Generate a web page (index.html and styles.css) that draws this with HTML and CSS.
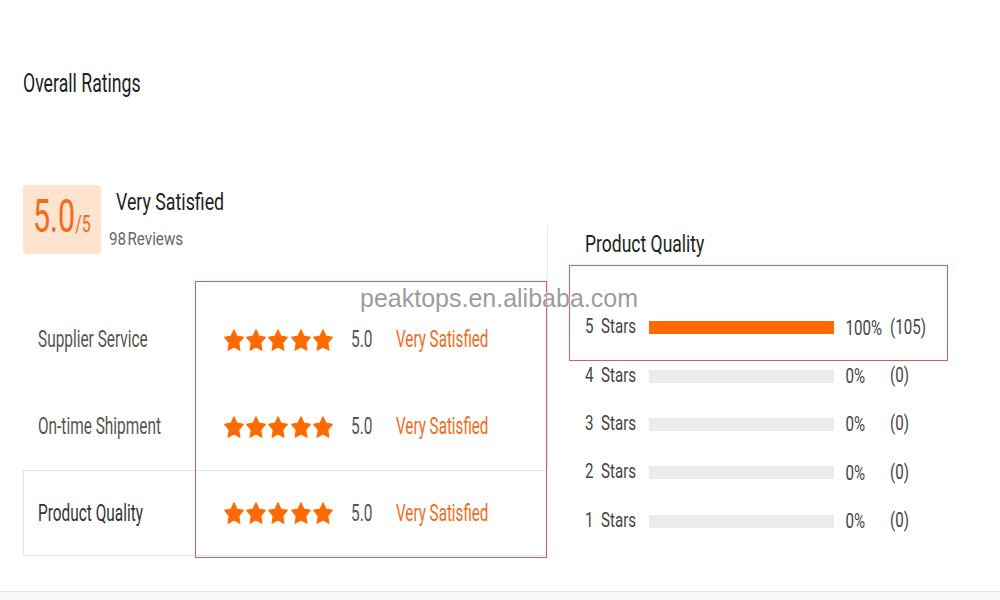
FILE: index.html
```html
<!DOCTYPE html>
<html lang="en">
<head>
<meta charset="utf-8">
<title>Overall Ratings</title>
<link rel="stylesheet" href="styles.css">
</head>
<body>
<svg class="defs" width="0" height="0" aria-hidden="true">
  <defs>
    <symbol id="star" viewBox="2 2 20 19.2" preserveAspectRatio="none">
      <polygon points="12,2.6 15.09,8.26 21.4,9.27 16.8,14.14 18,20.6 12,17.6 6,20.6 7.2,14.14 2.6,9.27 8.91,8.26" fill="#ff6a00" stroke="#ff6a00" stroke-width="1" stroke-linejoin="round"/>
    </symbol>
  </defs>
</svg>
<div class="page">
  <h1 class="title"><span class="sx">Overall Ratings</span></h1>

  <div class="overview">
    <section class="left">
      <div class="summary">
        <div class="score"><span class="sx score-num">5.0<span class="score-max">/5</span></span></div>
        <div class="summary-text">
          <div class="verdict"><span class="sx">Very Satisfied</span></div>
          <div class="reviews"><span class="sx">98 Reviews</span></div>
        </div>
      </div>

      <div class="crit">
        <div class="crit-row">
          <div class="crit-label"><span class="sx">Supplier Service</span></div>
          <div class="stars">
            <svg><use href="#star"/></svg><svg><use href="#star"/></svg><svg><use href="#star"/></svg><svg><use href="#star"/></svg><svg><use href="#star"/></svg>
          </div>
          <div class="crit-score"><span class="sx">5.0</span></div>
          <div class="crit-verdict"><span class="sx">Very Satisfied</span></div>
        </div>
        <div class="crit-row">
          <div class="crit-label"><span class="sx">On-time Shipment</span></div>
          <div class="stars">
            <svg><use href="#star"/></svg><svg><use href="#star"/></svg><svg><use href="#star"/></svg><svg><use href="#star"/></svg><svg><use href="#star"/></svg>
          </div>
          <div class="crit-score"><span class="sx">5.0</span></div>
          <div class="crit-verdict"><span class="sx">Very Satisfied</span></div>
        </div>
        <div class="crit-row boxed">
          <div class="crit-label dark"><span class="sx">Product Quality</span></div>
          <div class="stars">
            <svg><use href="#star"/></svg><svg><use href="#star"/></svg><svg><use href="#star"/></svg><svg><use href="#star"/></svg><svg><use href="#star"/></svg>
          </div>
          <div class="crit-score"><span class="sx">5.0</span></div>
          <div class="crit-verdict"><span class="sx">Very Satisfied</span></div>
        </div>
      </div>
    </section>

    <section class="right">
      <h2 class="dist-title"><span class="sx">Product Quality</span></h2>
      <div class="dist">
        <div class="dist-row">
          <span class="dist-label sx">5  Stars</span>
          <div class="bar"><div class="fill" style="width:100%"></div></div>
          <span class="pct sx">100%</span>
          <span class="cnt sx">(105)</span>
        </div>
        <div class="dist-row">
          <span class="dist-label sx">4  Stars</span>
          <div class="bar"><div class="fill" style="width:0%"></div></div>
          <span class="pct sx">0%</span>
          <span class="cnt sx">(0)</span>
        </div>
        <div class="dist-row">
          <span class="dist-label sx">3  Stars</span>
          <div class="bar"><div class="fill" style="width:0%"></div></div>
          <span class="pct sx">0%</span>
          <span class="cnt sx">(0)</span>
        </div>
        <div class="dist-row">
          <span class="dist-label sx">2  Stars</span>
          <div class="bar"><div class="fill" style="width:0%"></div></div>
          <span class="pct sx">0%</span>
          <span class="cnt sx">(0)</span>
        </div>
        <div class="dist-row">
          <span class="dist-label sx">1  Stars</span>
          <div class="bar"><div class="fill" style="width:0%"></div></div>
          <span class="pct sx">0%</span>
          <span class="cnt sx">(0)</span>
        </div>
      </div>
    </section>
  </div>

  <div class="mark mark-a"></div>
  <div class="mark mark-b"></div>
  <div class="watermark">peaktops.en.alibaba.com</div>
</div>
<div class="footer"></div>
</body>
</html>
```

FILE: styles.css
```css
* { box-sizing: border-box; }

html, body {
  margin: 0;
  padding: 0;
  background: #ffffff;
}

body {
  font-family: Roboto, "Liberation Sans", sans-serif;
  color: #333;
  width: 1000px;
  height: 600px;
  overflow: hidden;
}

.defs { position: absolute; }

/* horizontally condensed text */
.sx {
  display: inline-block;
  white-space: pre;
  transform: scaleX(var(--sx, 0.67));
  transform-origin: left center;
}

.page {
  position: relative;
  height: 591px;
  padding: 68px 0 0 23px;
}

.title {
  margin: 0;
  font-size: 26px;
  line-height: 30px;
  font-weight: 400;
  color: #222;
  --sx: 0.68;
}

.overview {
  display: flex;
  margin-top: 87px;
}

/* ---------- left ---------- */
.left {
  width: 525px;
  flex: none;
  background: linear-gradient(#ececec, #ececec) no-repeat right 0 top 40px / 1px 245px;
}

.summary {
  display: flex;
  height: 69px;
}

.score {
  width: 78px;
  height: 69px;
  background: #fee3cf;
  border-radius: 4px;
  display: flex;
  align-items: center;
  padding-left: 10px;
}

.score-num {
  font-size: 46px;
  line-height: 46px;
  color: #f26a1c;
  --sx: 0.66;
}

.score-max {
  font-size: 24px;
}

.summary-text {
  padding-left: 8px;
  padding-top: 3px;
}

.verdict {
  font-size: 24px;
  line-height: 28px;
  color: #222;
  padding-left: 7px;
  --sx: 0.74;
}

.reviews {
  margin-top: 12px;
  font-size: 19px;
  line-height: 22px;
  color: #666;
  word-spacing: -3px;
  --sx: 0.8;
}

.crit {
  margin-top: 42px;
  width: 524px;
}

.crit-row {
  display: grid;
  grid-template-columns: 201px 127px 45px auto;
  align-items: center;
  height: 87px;
  font-size: 23px;
  line-height: 27px;
}

.crit-row.boxed {
  height: 86px;
  box-shadow: inset 0 0 0 1px #e6e6e6;
}

.crit-label {
  padding-left: 15px;
  color: #555;
}

.crit-label.dark { color: #333; }

.stars {
  display: flex;
  gap: 2.2px;
}

.stars svg {
  width: 20px;
  height: 22px;
  display: block;
}

.crit-score {
  color: #555;
}

.crit-verdict {
  color: #f26a1c;
  --sx: 0.66;
}

/* ---------- right ---------- */
.right {
  flex: 1;
  padding-left: 37px;
}

.dist-title {
  margin: 45px 0 0;
  font-size: 24px;
  line-height: 28px;
  font-weight: 400;
  color: #222;
  --sx: 0.73;
}

.dist {
  margin-top: 44px;
}

.dist-row {
  display: grid;
  grid-template-columns: 64px 185px 56px auto;
  align-items: center;
  height: 48.4px;
  font-size: 21px;
  line-height: 24px;
  color: #444;
  --sx: 0.72;
}

.bar {
  height: 13px;
  background: #ebebeb;
  margin-top: 3px;
}

.fill {
  height: 100%;
  background: #ff6a00;
}

.pct {
  padding-left: 16px;
  margin-top: 3px;
}

.cnt {
  margin-top: 1px;
}

/* ---------- overlays ---------- */
.mark {
  position: absolute;
  border: 1.5px solid #e4585c;
}

.mark-a {
  left: 195px;
  top: 281px;
  width: 352px;
  height: 277px;
}

.mark-b {
  left: 569px;
  top: 265px;
  width: 379px;
  height: 96px;
}

.watermark {
  position: absolute;
  left: 360px;
  top: 284px;
  font-family: "Liberation Sans", Arial, sans-serif;
  font-size: 25px;
  line-height: normal;
  color: #9c9c9c;
  text-shadow: 0 0 2px #fff, 0 0 1px #fff;
  white-space: nowrap;
}

.footer {
  height: 9px;
  border-top: 1px solid #e6e6e6;
  background: #f7f7f7;
}
```
